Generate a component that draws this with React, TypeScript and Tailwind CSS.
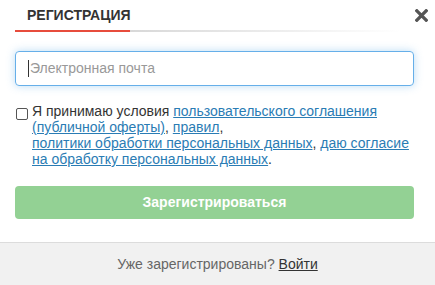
export default function App() {
  const font = { fontFamily: '"Liberation Sans", Arial, sans-serif' };
  return (
    <div className="w-[435px] h-[285px] bg-white flex flex-col overflow-hidden text-[#333]" style={font}>
      <div className="flex items-start justify-between pl-[15px] pr-[7px] pt-[6px]">
        <div className="flex-1 flex flex-col">
          <div className="pl-[12px] w-[115px] text-[14px] font-bold uppercase leading-[18px] text-[#333] whitespace-nowrap">
            Регистрация
          </div>
          <div className="flex mt-[6px] h-[2px]">
            <div className="w-[115px] bg-[#e74c3c]" />
            <div className="flex-1 h-[2px] bg-gradient-to-r from-[#d8d8d8] to-white" />
          </div>
        </div>
        <svg width="13" height="13" viewBox="0 0 14 14" className="mt-[3px] ml-[14px]">
          <path d="M2 2 L12 12 M12 2 L2 12" stroke="#555" strokeWidth="3.6" strokeLinecap="square" />
        </svg>
      </div>

      <div className="pl-[15px] pr-[21px] mt-[19px]">
        <div className="h-[35px] rounded-[4px] border border-[#66afe9] shadow-[0_0_8px_rgba(102,175,233,0.45)] flex items-center px-[12px] text-[14px] text-[#999]">
          <span className="w-px h-[17px] bg-[#333] mr-[1px]" />
          Электронная почта
        </div>
      </div>

      <div className="flex pl-[16px] pr-[16px] mt-[17px] text-[14px] leading-[16px]">
        <span className="mt-[5px] w-[12px] h-[12px] shrink-0 rounded-[2px] border border-[#555] bg-white" />
        <p className="ml-[4px] text-[#333]">
          Я принимаю условия{" "}
          <a className="text-[#2a7cb4] underline">пользовательского соглашения (публичной оферты)</a>,{" "}
          <a className="text-[#2a7cb4] underline">правил</a>,
          <br />
          <a className="text-[#2a7cb4] underline">политики обработки персональных данных</a>,{" "}
          <a className="text-[#2a7cb4] underline">даю согласие на обработку персональных данных</a>.
        </p>
      </div>

      <div className="pl-[15px] pr-[21px] mt-[19px]">
        <div className="h-[33px] rounded-[4px] bg-[#93d194] flex items-center justify-center text-white font-bold text-[14px]">
          Зарегистрироваться
        </div>
      </div>

      <div className="mt-auto h-[43px] border-t border-[#dcdcdc] bg-[#f1f1f1] flex items-center justify-center text-[14px] text-[#666]">
        Уже зарегистрированы?&nbsp;<a className="text-[#333] underline">Войти</a>
      </div>
    </div>
  );
}
